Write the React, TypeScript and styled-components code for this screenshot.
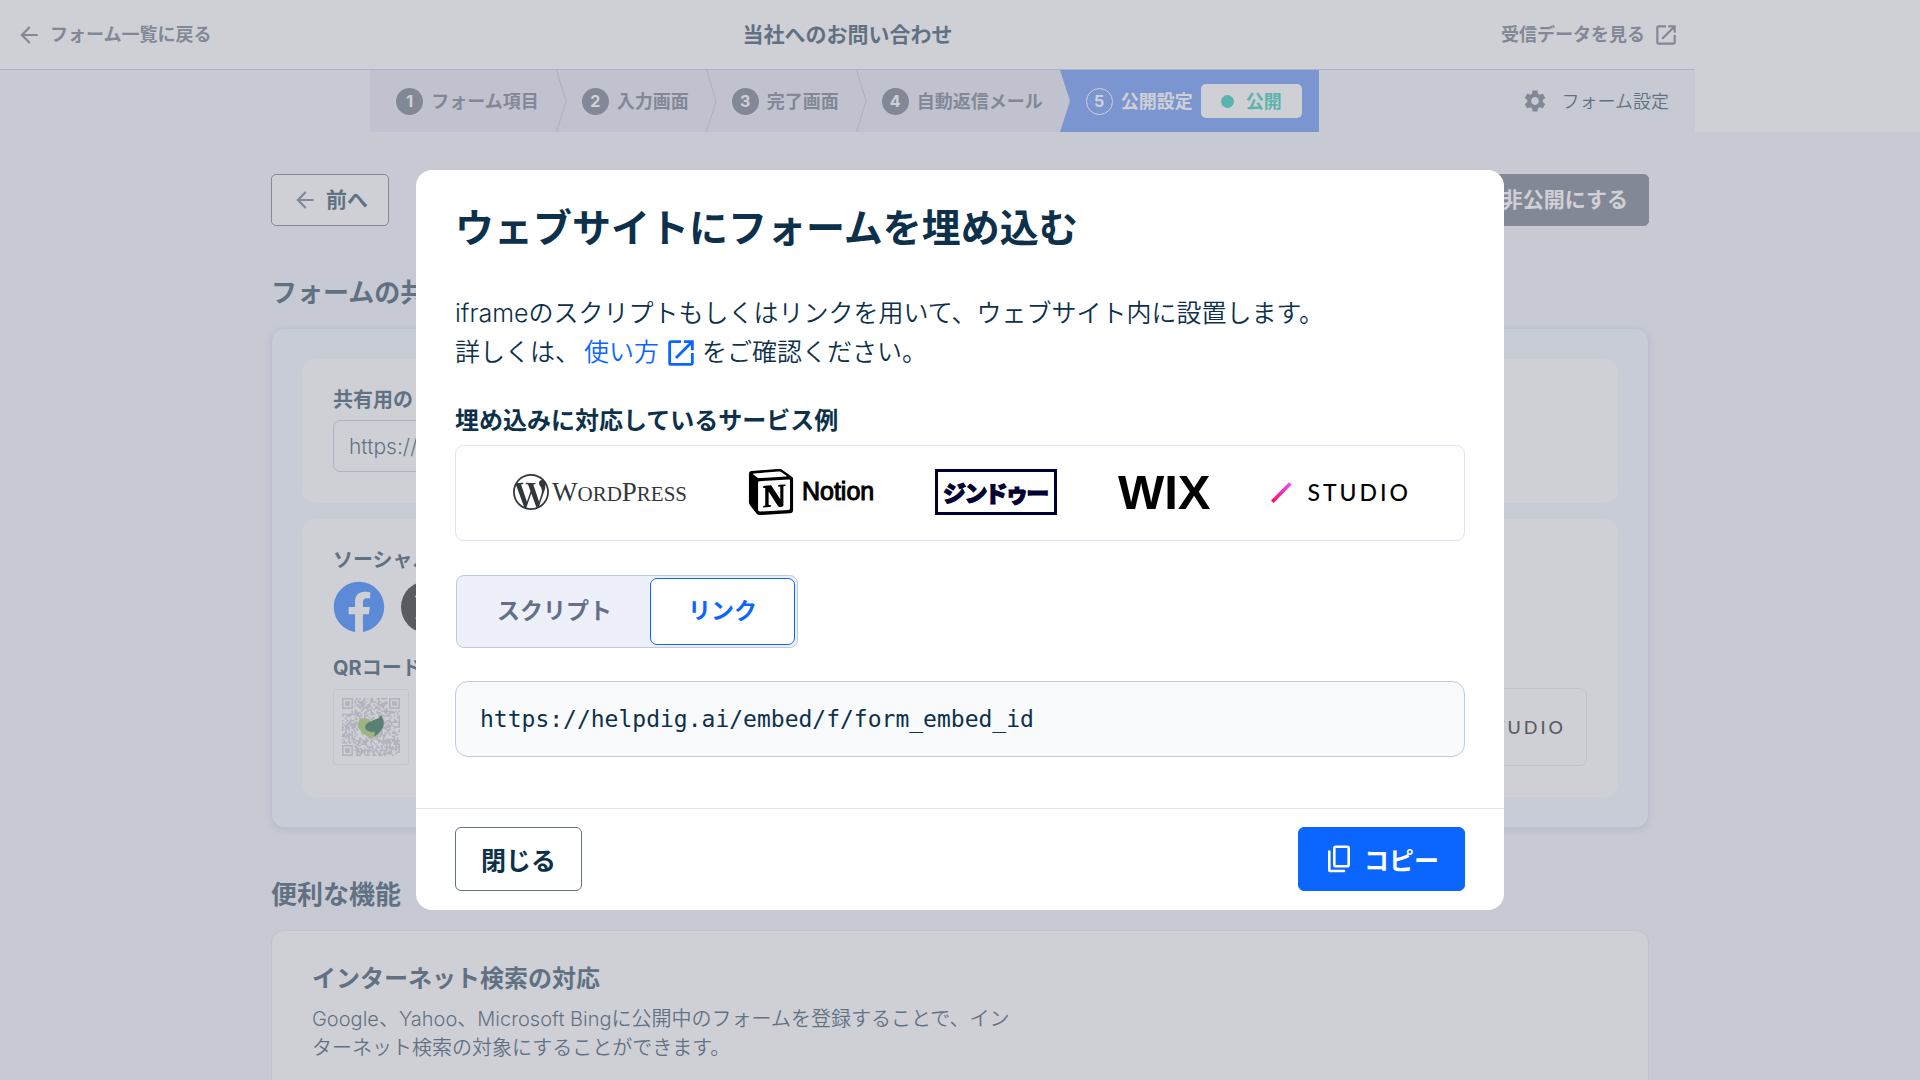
import React from "react";
import styled, { createGlobalStyle, css } from "styled-components";
import { SiWordpress, SiNotion } from "react-icons/si";
import { FaFacebook } from "react-icons/fa";
import { FaXTwitter } from "react-icons/fa6";
import { MdSettings, MdArrowBack, MdOpenInNew } from "react-icons/md";

const ink = "#0d314b";
const slate = "#576275";
const blue = "#0b66ff";

const GlobalStyle = createGlobalStyle`
  *, *::before, *::after { box-sizing: border-box; }
  body {
    margin: 0;
    overflow: hidden;
    background: #edeff8;
    color: ${ink};
    font-family: Inter, "Noto Sans CJK JP", sans-serif;
    font-size: 20px;
    font-weight: 350;
    line-height: 1.5;
  }
  button, input { font: inherit; color: inherit; }
  button { cursor: pointer; }
  h1, h2, h3, p { margin: 0; }
  a { text-decoration: none; color: inherit; }
`;

const Page = styled.div`
  height: 100vh;
  overflow: hidden;
`;

const TopArea = styled.div`
  display: flex;
  background: #fff;
`;

const TopInner = styled.div`
  flex: 0 1 1695px;
`;

const Header = styled.header`
  display: grid;
  grid-template-columns: 1fr auto 1fr;
  align-items: center;
  height: 70px;
  padding: 0 16px;
  border-bottom: 1px solid #aec5e0;
  background: #fff;
`;

const HeaderTitle = styled.h1`
  font-size: 21px;
  font-weight: 700;
`;

const HeaderLink = styled.a<{ $end?: boolean }>`
  display: flex;
  align-items: center;
  justify-self: ${(p) => (p.$end ? "end" : "start")};
  gap: 8px;
  color: ${slate};
  font-size: 18px;
  font-weight: 700;
  svg { font-size: 26px; }
`;

const StepBar = styled.nav`
  display: grid;
  grid-template-columns: 1fr auto 1fr;
  height: 62px;
  padding-right: 6px;
  background: #edeff8;
`;

const Steps = styled.ol`
  grid-column: 2;
  display: flex;
  margin: 0;
  padding: 0;
  list-style: none;
  background: #dee0f1;
`;

const Step = styled.li<{ $active?: boolean }>`
  display: flex;
  align-items: center;
  gap: 8px;
  padding: 0 17px 0 26px;
  position: relative;
  color: ${slate};
  font-size: 18px;
  font-weight: 700;
  ${(p) =>
    p.$active &&
    css`
      background: #487ef1;
      color: #fff;
    `}
`;

const Chevron = styled.svg`
  position: absolute;
  left: 0;
  top: 0;
  width: 11px;
  height: 62px;
`;

const StepNumber = styled.span<{ $active?: boolean }>`
  display: grid;
  place-items: center;
  width: 27px;
  height: 27px;
  border-radius: 50%;
  font-size: 16px;
  line-height: 1;
  background: ${(p) => (p.$active ? "transparent" : slate)};
  border: ${(p) => (p.$active ? "1px solid #fff" : "0")};
  color: #fff;
`;

const StatusBadge = styled.span`
  display: flex;
  align-items: center;
  gap: 12px;
  height: 34px;
  padding: 0 20px;
  border-radius: 5px;
  background: #fff;
  color: #00c0a6;
  &::before {
    content: "";
    width: 13px;
    height: 13px;
    border-radius: 50%;
    background: currentColor;
  }
`;

const SettingsButton = styled.button`
  justify-self: end;
  display: flex;
  align-items: center;
  gap: 14px;
  padding: 0 20px 0 0;
  border: 0;
  background: none;
  font-size: 18px;
  svg { font-size: 26px; color: ${slate}; }
`;

const Content = styled.main`
  width: 1378px;
  max-width: calc(100% - 40px);
  margin: 0 auto;
  padding-top: 42px;
`;

const ActionRow = styled.div`
  display: flex;
  justify-content: space-between;
  height: 52px;
`;

const ActionButton = styled.button<{ $dark?: boolean }>`
  display: flex;
  align-items: center;
  gap: 8px;
  padding: 0 20px;
  border: 1px solid ${slate};
  border-radius: 5px;
  background: ${(p) => (p.$dark ? slate : "#fff")};
  color: ${(p) => (p.$dark ? "#fff" : ink)};
  font-size: 21px;
  font-weight: 700;
  svg { font-size: 26px; color: ${slate}; }
`;

const SectionTitle = styled.h2`
  margin-top: 47px;
  font-size: 26px;
  line-height: 40px;
  font-weight: 700;
`;

const ShareCard = styled.section`
  display: flex;
  flex-direction: column;
  gap: 16px;
  margin-top: 15px;
  padding: 30px;
  border: 1px solid #cfdffa;
  border-radius: 13px;
  background: #eff6ff;
  box-shadow: 0 2px 6px rgba(87, 98, 160, 0.2);
`;

const Panel = styled.div`
  padding: 26px 31px 31px;
  border-radius: 13px;
  background: #fff;
`;

const FieldLabel = styled.label`
  display: block;
  font-size: 20px;
  line-height: 30px;
  font-weight: 700;
`;

const GroupTitle = styled.h3`
  font-size: 20px;
  line-height: 30px;
  font-weight: 700;
`;

const ShareInput = styled.input`
  display: block;
  width: 400px;
  height: 52px;
  margin-top: 5px;
  padding: 0 15px;
  border: 1px solid #aec5e0;
  border-radius: 7px;
  background: #fff;
  font-size: 21px;
`;

const SocialRow = styled.div`
  display: flex;
  gap: 16px;
  margin: 6px 0 20px;
`;

const FacebookLink = styled.a`
  display: block;
  height: 52px;
  color: #0866ff;
  font-size: 52px;
  line-height: 0;
`;

const XLink = styled.a`
  display: grid;
  place-items: center;
  width: 52px;
  height: 52px;
  border-radius: 50%;
  background: #000;
  color: #fff;
  font-size: 28px;
`;

const ShareItems = styled.div`
  display: flex;
  justify-content: space-between;
  align-items: center;
  margin-top: 5px;
`;

const QrFrame = styled.div`
  width: 76px;
  height: 76px;
  padding: 8px;
  border: 1px solid #e4e6ee;
  border-radius: 3px;
  svg { display: block; }
`;

const StudioTile = styled.div`
  display: flex;
  align-items: center;
  height: 78px;
  padding: 0 20px;
  border: 1px solid #dee0f1;
  border-radius: 7px;
`;

const InfoCard = styled.section`
  margin-top: 15px;
  min-height: 240px;
  padding: 30px 40px;
  border: 1px solid #dee0f1;
  border-radius: 13px;
  background: #fff;
`;

const InfoTitle = styled.h3`
  font-size: 24px;
  line-height: 36px;
  font-weight: 700;
`;

const InfoText = styled.p`
  max-width: 705px;
  margin-top: 8px;
  line-height: 29px;
`;

const Overlay = styled.div`
  position: fixed;
  inset: 0;
  display: grid;
  place-items: center;
  background: rgba(167, 168, 180, 0.54);
`;

const Dialog = styled.div`
  width: 1088px;
  max-width: calc(100% - 40px);
  border-radius: 16px;
  background: #fff;
`;

const DialogBody = styled.div`
  padding: 29px 39px 51px;
`;

const DialogTitle = styled.h2`
  font-size: 39px;
  line-height: 58px;
  font-weight: 700;
`;

const Description = styled.p`
  margin-top: 37px;
  font-size: 25px;
  line-height: 39px;
`;

const HelpLink = styled.a`
  display: inline-flex;
  align-items: center;
  gap: 5px;
  height: 39px;
  margin: 0 4px;
  color: ${blue};
  vertical-align: top;
  svg { font-size: 34px; }
`;

const ServicesTitle = styled.h3`
  margin-top: 31px;
  font-size: 24px;
  line-height: 36px;
  font-weight: 700;
`;

const Services = styled.ul`
  display: flex;
  align-items: center;
  justify-content: space-between;
  height: 96px;
  margin: 6px 0 0;
  padding: 0 53px 2px 57px;
  border: 1px solid #dde5f0;
  border-radius: 9px;
  list-style: none;
`;

const Service = styled.li`
  display: flex;
  align-items: center;
`;

const WordPressLogo = styled.span`
  display: flex;
  align-items: center;
  gap: 3px;
  color: #32373c;
  font-family: "Liberation Serif", serif;
  font-size: 27px;
  line-height: 1;
  svg { font-size: 36px; }
  small { font-size: 21px; }
`;

const NotionLogo = styled.span`
  display: flex;
  align-items: center;
  gap: 8px;
  color: #000;
  font-family: "Liberation Sans", sans-serif;
  font-size: 25px;
  -webkit-text-stroke: 1px #000;
  svg { font-size: 46px; -webkit-text-stroke: 0; }
`;

const JimdoLogo = styled.span`
  display: grid;
  place-items: center;
  width: 122px;
  height: 46px;
  border: 3px solid #000032;
  color: #000032;
  font-family: "Noto Sans CJK JP", sans-serif;
  font-size: 23px;
  font-weight: 900;
  line-height: 1;
  font-feature-settings: "palt";
  -webkit-text-stroke: 1px #000032;
`;

const WixLogo = styled.span`
  color: #000;
  font-family: "Liberation Sans", sans-serif;
  font-size: 49px;
  font-weight: 700;
  line-height: 1;
`;

const StudioLogo = styled.span<{ $small?: boolean }>`
  display: flex;
  align-items: center;
  gap: 15px;
  color: #000;
  font-family: Lato, sans-serif;
  font-weight: 500;
  font-size: ${(p) => (p.$small ? "18px" : "23px")};
  line-height: 1;
  letter-spacing: 3px;
`;

const Tabs = styled.div`
  display: flex;
  width: fit-content;
  margin: 34px 0 0 1px;
  padding: 2px;
  border: 1px solid #bccbdf;
  border-radius: 8px;
  background: #edf0f9;
`;

const Tab = styled.button<{ $selected?: boolean }>`
  height: 67px;
  padding: 0 37px;
  border: 1px solid ${(p) => (p.$selected ? blue : "transparent")};
  border-radius: 7px;
  background: ${(p) => (p.$selected ? "#fff" : "transparent")};
  color: ${(p) => (p.$selected ? blue : "#64708a")};
  font-size: 23px;
  font-weight: 700;
`;

const EmbedUrl = styled.code`
  display: flex;
  align-items: center;
  height: 76px;
  margin-top: 33px;
  padding: 0 24px;
  border: 1px solid #bccbdf;
  border-radius: 13px;
  background: #f8fafc;
  font-family: "DejaVu Sans Mono", monospace;
  font-size: 23px;
  line-height: 40px;
`;

const DialogFooter = styled.footer`
  display: flex;
  justify-content: space-between;
  padding: 18px 39px 19px;
  border-top: 1px solid #dfe6ef;
`;

const DialogButton = styled.button<{ $primary?: boolean }>`
  display: flex;
  align-items: center;
  gap: 14px;
  height: 64px;
  padding: 0 25px;
  border: 1px solid ${(p) => (p.$primary ? blue : "#64708a")};
  border-radius: 6px;
  background: ${(p) => (p.$primary ? blue : "#fff")};
  color: ${(p) => (p.$primary ? "#fff" : ink)};
  font-size: 25px;
  font-weight: 700;
  line-height: normal;
`;

const steps = ["フォーム項目", "入力画面", "完了画面", "自動返信メール"];

function StudioMark({ small }: { small?: boolean }) {
  const size = small ? 17 : 21;
  const id = small ? "slash-small" : "slash";
  return (
    <StudioLogo $small={small}>
      <svg width={size} height={size} viewBox="0 0 21 21" aria-hidden="true">
        <defs>
          <linearGradient id={id} x1="0" y1="1" x2="1" y2="0">
            <stop offset="0" stopColor="#ff0a54" />
            <stop offset="1" stopColor="#f24cff" />
          </linearGradient>
        </defs>
        <path d="M0 18.5 18 0.3 20.6 2.8 2.600 21Z" fill={`url(#${id})`} />
      </svg>
      STUDIO
    </StudioLogo>
  );
}

function QrCode() {
  const n = 37;
  let d = "";
  let seed = 17;
  const inCorner = (x: number, y: number) =>
    (x < 8 && y < 8) || (x > n - 9 && y < 8) || (x < 8 && y > n - 9);
  for (let y = 0; y < n; y++) {
    for (let x = 0; x < n; x++) {
      seed = (seed * 1103515245 + 12345) % 2147483648;
      if (!inCorner(x, y) && seed / 2147483648 > 0.45) d += `M${x} ${y}h1v1h-1z`;
    }
  }
  const corners = [[0, 0], [n - 7, 0], [0, n - 7]];
  return (
    <svg width="58" height="58" viewBox="0 0 37 37" role="img" aria-label="QRコード">
      <path d={d} fill="#bfc0c6" />
      {corners.map(([x, y]) => (
        <g key={`${x}-${y}`}>
          <rect x={x + 0.5} y={y + 0.5} width="6" height="6" fill="none" stroke="#bfc0c6" />
          <rect x={x + 2} y={y + 2} width="3" height="3" fill="#bfc0c6" />
        </g>
      ))}
      <path d="M18.500 26C14 23.500 10 20.500 10.200 16.800C10.500 12.500 15 11.500 18.500 14.500L24 23Z" fill="#94c24c" />
      <path d="M14.800 18C15.500 15.500 18.500 15 20.500 13.800L23 13 25 10.800 26.500 14.500C27.500 19 24 22.500 20.500 24.600L21 21.500C18 22 14.500 21 14.800 18Z" fill="#00512f" />
    </svg>
  );
}

function CopyIcon() {
  return (
    <svg width="26" height="28" viewBox="0 0 26 28" fill="none" stroke="currentColor" strokeWidth="2.600" strokeLinejoin="round" strokeLinecap="round" aria-hidden="true">
      <rect x="10.300" y="1.800" width="14.400" height="19.500" rx="1.500" />
      <path d="M5.300 6.500v18.200a1.300 1.300 0 0 0 1.300 1.300H20" />
    </svg>
  );
}

export default function App() {
  return (
    <>
      <GlobalStyle />
      <Page>
        <TopArea>
          <TopInner>
            <Header>
              <HeaderLink href="#list">
                <MdArrowBack />
                フォーム一覧に戻る
              </HeaderLink>
              <HeaderTitle>当社へのお問い合わせ</HeaderTitle>
              <HeaderLink href="#data" $end>
                受信データを見る
                <MdOpenInNew />
              </HeaderLink>
            </Header>
            <StepBar>
              <Steps>
                {steps.map((label, i) => (
                  <Step key={label}>
                    {i > 0 && (
                      <Chevron viewBox="0 0 11 62" aria-hidden="true">
                        <path d="M0.500 0 10 31 0.500 62" fill="none" stroke="#a9bddb" />
                      </Chevron>
                    )}
                    <StepNumber>{i + 1}</StepNumber>
                    {label}
                  </Step>
                ))}
                <Step $active aria-current="step">
                  <Chevron viewBox="0 0 11 62" aria-hidden="true">
                    <path d="M0 0 10 31 0 62Z" fill="#dee0f1" />
                  </Chevron>
                  <StepNumber $active>5</StepNumber>
                  公開設定
                  <StatusBadge>公開</StatusBadge>
                </Step>
              </Steps>
              <SettingsButton type="button">
                <MdSettings />
                フォーム設定
              </SettingsButton>
            </StepBar>
          </TopInner>
        </TopArea>

        <Content>
          <ActionRow>
            <ActionButton type="button">
              <MdArrowBack />
              前へ
            </ActionButton>
            <ActionButton type="button" $dark>
              非公開にする
            </ActionButton>
          </ActionRow>

          <SectionTitle>フォームの共有</SectionTitle>
          <ShareCard>
            <Panel>
              <FieldLabel htmlFor="share-url">共有用のリンク</FieldLabel>
              <ShareInput id="share-url" readOnly value="https://" />
            </Panel>
            <Panel>
              <GroupTitle>ソーシャル</GroupTitle>
              <SocialRow>
                <FacebookLink href="#facebook" aria-label="Facebook">
                  <FaFacebook />
                </FacebookLink>
                <XLink href="#x" aria-label="X">
                  <FaXTwitter />
                </XLink>
              </SocialRow>
              <GroupTitle>QRコード</GroupTitle>
              <ShareItems>
                <QrFrame>
                  <QrCode />
                </QrFrame>
                <StudioTile>
                  <StudioMark small />
                </StudioTile>
              </ShareItems>
            </Panel>
          </ShareCard>

          <SectionTitle>便利な機能</SectionTitle>
          <InfoCard>
            <InfoTitle>インターネット検索の対応</InfoTitle>
            <InfoText>
              Google、Yahoo、Microsoft Bingに公開中のフォームを登録することで、インターネット検索の対象にすることができます。
            </InfoText>
          </InfoCard>
        </Content>
      </Page>

      <Overlay>
        <Dialog role="dialog" aria-modal="true" aria-labelledby="dialog-title">
          <DialogBody>
            <DialogTitle id="dialog-title">ウェブサイトにフォームを埋め込む</DialogTitle>
            <Description>
              iframeのスクリプトもしくはリンクを用いて、ウェブサイト内に設置します。
              <br />
              詳しくは、
              <HelpLink href="#help">
                使い方
                <MdOpenInNew />
              </HelpLink>
              をご確認ください。
            </Description>
            <ServicesTitle>埋め込みに対応しているサービス例</ServicesTitle>
            <Services>
              <Service>
                <WordPressLogo>
                  <SiWordpress />
                  <span>W<small>ORD</small>P<small>RESS</small></span>
                </WordPressLogo>
              </Service>
              <Service>
                <NotionLogo>
                  <SiNotion />
                  Notion
                </NotionLogo>
              </Service>
              <Service>
                <JimdoLogo>ジンドゥー</JimdoLogo>
              </Service>
              <Service>
                <WixLogo>WIX</WixLogo>
              </Service>
              <Service>
                <StudioMark />
              </Service>
            </Services>
            <Tabs role="tablist">
              <Tab type="button" role="tab" aria-selected="false">スクリプト</Tab>
              <Tab type="button" role="tab" aria-selected="true" $selected>リンク</Tab>
            </Tabs>
            <EmbedUrl>https://helpdig.ai/embed/f/form_embed_id</EmbedUrl>
          </DialogBody>
          <DialogFooter>
            <DialogButton type="button">閉じる</DialogButton>
            <DialogButton type="button" $primary>
              <CopyIcon />
              コピー
            </DialogButton>
          </DialogFooter>
        </Dialog>
      </Overlay>
    </>
  );
}
